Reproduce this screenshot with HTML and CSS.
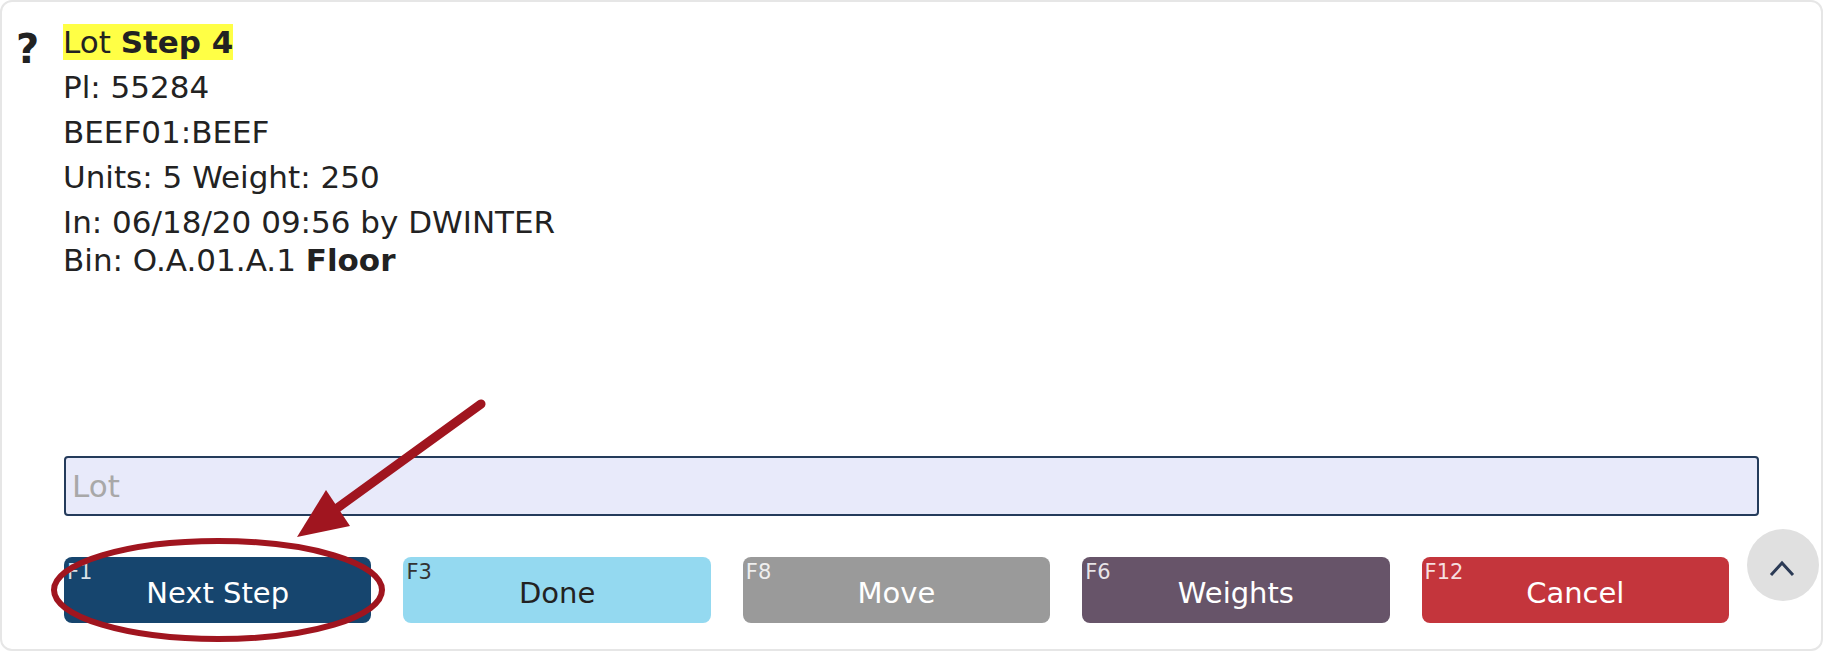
FILE: index.html
```html
<!DOCTYPE html>
<html lang="en">
<head>
	<meta charset="UTF-8">
	<title>Lot</title>
	<link rel="stylesheet" href="styles.css">
</head>
<body>
	<div class="card">
		<div class="top">
			<div class="help">?</div>
			<div class="info">
				<div class="row"><span class="mark">Lot <b>Step 4</b></span></div>
				<div class="row">Pl: 55284</div>
				<div class="row">BEEF01:BEEF</div>
				<div class="row">Units: 5 Weight: 250</div>
				<div class="row">In: 06/18/20 09:56 by DWINTER<br>Bin: O.A.01.A.1 <b>Floor</b></div>
			</div>
		</div>
		<div class="bottom">
			<input class="entry" type="text" placeholder="Lot">
			<div class="keys">
				<button class="key next"><span class="fk">F1</span>Next Step</button>
				<button class="key done"><span class="fk">F3</span>Done</button>
				<button class="key move"><span class="fk">F8</span>Move</button>
				<button class="key weights"><span class="fk">F6</span>Weights</button>
				<button class="key cancel"><span class="fk">F12</span>Cancel</button>
			</div>
		</div>
	</div>
	<a class="totop" href="#">
		<svg width="72" height="72" viewBox="0 0 72 72">
			<polyline points="24,46 35,34 46,46" fill="none" stroke="#2b3a55" stroke-width="3"/>
		</svg>
	</a>
	<!-- annotation drawn over the screen -->
	<svg class="note" width="1823" height="651" viewBox="0 0 1823 651">
		<ellipse cx="218" cy="590" rx="164" ry="49" fill="none" stroke="#a0151f" stroke-width="6"/>
		<line x1="481" y1="404" x2="336" y2="509" stroke="#a0151f" stroke-width="9" stroke-linecap="round"/>
		<polygon points="297,537 326,490 350,526" fill="#a0151f"/>
	</svg>
</body>
</html>
```
FILE: styles.css
```css
body{
	margin: 0;
	padding: 0;
	font-family: "DejaVu Sans", Verdana, sans-serif;
	color: #222;
	background: #fff;
}
.card{
	height: 651px;
	box-sizing: border-box;
	border: 2px solid #e6e6e6;
	border-radius: 12px;
	padding: 21px 62px 26px 14px;
	display: flex;
	flex-direction: column;
}
.top{
	flex: 1;
	display: flex;
}
.help{
	width: 47px;
	font-size: 40px;
	font-weight: bold;
	line-height: 38px;
	padding-top: 7px;
}
.info{
	font-size: 31px;
}
.row{
	line-height: 38px;
	margin-bottom: 7px;
}
.mark{
	background: #ffff45;
}
.bottom{
	margin-left: 48px;
}
.entry{
	display: block;
	width: 100%;
	height: 60px;
	box-sizing: border-box;
	border: 2px solid #243b5b;
	border-radius: 4px;
	background: #e8eafa;
	padding: 0 6px;
	font-family: inherit;
	font-size: 31px;
	color: #222;
	outline: none;
}
.entry::placeholder{ color: #a8a8a8; }
.keys{
	display: grid;
	grid-template-columns: repeat(5, 1fr);
	gap: 32px;
	margin-top: 41px;
	padding-right: 30px;
}
.key{
	position: relative;
	height: 66px;
	box-sizing: border-box;
	border: none;
	border-radius: 8px;
	padding: 6px 0 0 0;
	margin: 0;
	font-family: inherit;
	font-size: 29px;
	line-height: 60px;
	text-align: center;
	color: #fff;
	cursor: pointer;
}
.fk{
	position: absolute;
	left: 3px;
	top: 5px;
	font-size: 21px;
	line-height: 21px;
	color: rgba(255,255,255,.85);
}
.next{ background: #16456e; }
.done{ background: #94d9f0; color: #222; }
.done .fk{ color: #333; }
.move{ background: #9a9a9a; }
.weights{ background: #675469; }
.cancel{ background: #c4353c; }
.totop{
	position: fixed;
	right: 4px;
	bottom: 50px;
	width: 72px;
	height: 72px;
	border-radius: 50%;
	background: #e0e0e0;
	display: block;
}
.totop svg{ display: block; }
.note{
	position: absolute;
	left: 0;
	top: 0;
	pointer-events: none;
}
```
